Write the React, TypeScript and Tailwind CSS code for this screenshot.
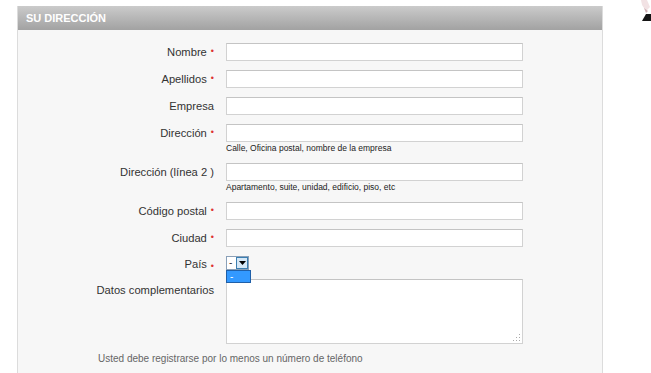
import React from "react";

const font = { fontFamily: '"Liberation Sans", Arial, sans-serif' };

function Req() {
  return <span className="ml-[4px] text-[9px] text-[#d33]">•</span>;
}

function Field({
  label,
  required,
  hint,
}: {
  label: string;
  required?: boolean;
  hint?: string;
}) {
  return (
    <div className="flex">
      <div className="w-[196px] h-[18px] flex items-center justify-end text-[11.2px] text-[#333]">
        {label}
        {required && <Req />}
      </div>
      <div className="ml-[12px] flex flex-col">
        <div className="w-[297px] h-[18px] bg-white border border-[#d2d2d2] border-t-[#c4c4c4]" />
        {hint && (
          <div className="text-[8.5px] text-[#222] leading-[12px] h-[12px]">
            {hint}
          </div>
        )}
      </div>
    </div>
  );
}

export default function App() {
  return (
    <div className="w-[651px] h-[373px] bg-white overflow-hidden relative" style={font}>
      {/* bit of picture at top right */}
      <svg className="absolute right-0 top-0" width="12" height="22" viewBox="0 0 12 22">
        <path d="M2 0 L8 0 L11 7 L7 11 L3 5 Z" fill="#f2e2e4" />
        <path d="M5 8 L9 11 L7 13 Z" fill="#cfb0b5" />
        <path d="M3 21 L7 14 L12 14 L12 21 Z" fill="#151515" />
      </svg>

      <div className="ml-[17px] mt-[6px] w-[586px] h-[367px] bg-[#f7f7f7] border-l border-r border-[#dcdcdc]">
        <div className="h-[24px] bg-gradient-to-b from-[#cbcbcb] to-[#a2a2a2] flex items-center pl-[8px]">
          <span className="text-white font-bold text-[11px]">SU DIRECCIÓN</span>
        </div>

        <div className="pt-[13px] flex flex-col gap-[9px]">
          <Field label="Nombre" required />
          <Field label="Apellidos" required />
          <Field label="Empresa" />
          <Field label="Dirección" required hint="Calle, Oficina postal, nombre de la empresa" />
          <Field label="Dirección (línea 2 )" hint="Apartamento, suite, unidad, edificio, piso, etc" />
          <Field label="Código postal" required />
          <Field label="Ciudad" required />

          <div className="flex">
            <div className="w-[196px] h-[17px] flex items-end justify-end text-[11.2px] text-[#333]">
              País
              <Req />
            </div>
            <div className="ml-[12px] relative">
              <div className="w-[23px] h-[14px] bg-white border border-[#8aa0b8] flex items-center">
                <span className="text-[10px] leading-none text-[#333] pl-[2px] w-[9px]">-</span>
                <div className="w-[12px] h-[12px] bg-[#d6e8f7] border border-[#3c7fb1] flex items-center justify-center">
                  <svg width="7" height="4" viewBox="0 0 7 4">
                    <path d="M0 0 L7 0 L3.5 4 Z" fill="#000" />
                  </svg>
                </div>
              </div>
              <div className="absolute left-0 top-[14px] w-[25px] h-[13px] bg-[#3399ff] border border-[#1f5fa8] z-10 flex items-center">
                <span className="text-[10px] leading-none text-white pl-[3px]">-</span>
              </div>
            </div>
          </div>

          <div className="flex -mt-[3px]">
            <div className="w-[196px] pt-[3px] text-right text-[11.2px] text-[#333]">
              Datos complementarios
            </div>
            <div className="ml-[12px] w-[297px] h-[65px] bg-white border border-[#d2d2d2] border-t-[#c4c4c4] relative">
              <svg className="absolute right-[1px] bottom-[1px]" width="8" height="8" viewBox="0 0 8 8">
                <rect x="6" y="0" width="1" height="1" fill="#aaa" />
                <rect x="3" y="3" width="1" height="1" fill="#aaa" />
                <rect x="6" y="3" width="1" height="1" fill="#aaa" />
                <rect x="0" y="6" width="1" height="1" fill="#aaa" />
                <rect x="3" y="6" width="1" height="1" fill="#aaa" />
                <rect x="6" y="6" width="1" height="1" fill="#aaa" />
              </svg>
            </div>
          </div>

          <div className="pl-[80px] text-[10px] text-[#666] leading-[14px] -mt-[1px]">
            Usted debe registrarse por lo menos un número de teléfono
          </div>

          <div className="flex mt-[1px]">
            <div className="ml-[208px] w-[297px] h-[18px] bg-white border border-[#d2d2d2]" />
          </div>
        </div>
      </div>
    </div>
  );
}
